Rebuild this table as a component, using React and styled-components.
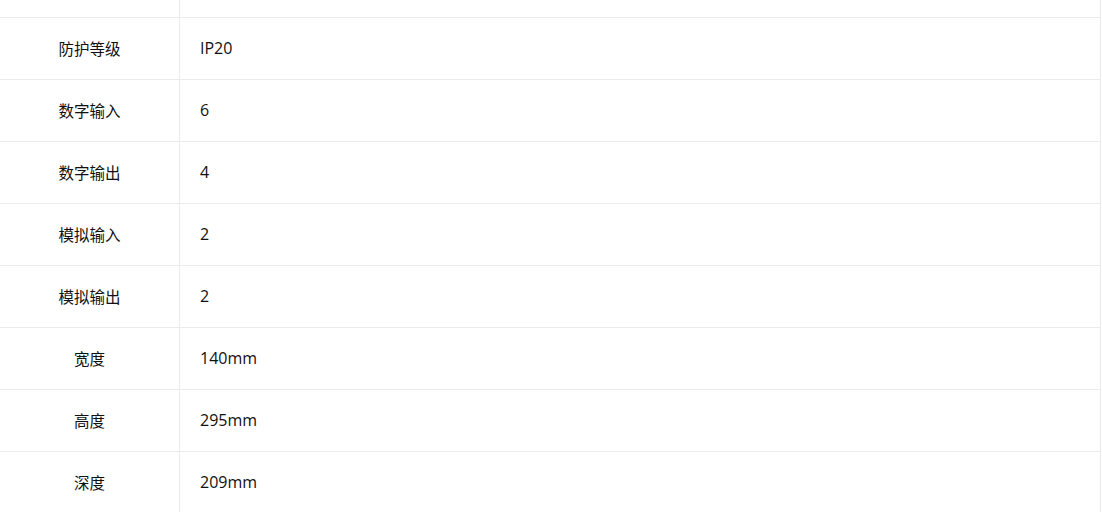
import React from "react";
import styled, { createGlobalStyle } from "styled-components";

const Global = createGlobalStyle`
  html, body { margin: 0; padding: 0; background: #fff; }
  body { font-family: "Noto Sans CJK SC", "Noto Sans", sans-serif; overflow: hidden; }
`;

const Table = styled.div`
  width: 1101px;
  border-right: 1px solid #ebebeb;
  box-sizing: border-box;
`;

const Row = styled.div`
  display: grid;
  grid-template-columns: 180px 1fr;
  height: ${(p) => (p.$partial ? 18 : 62)}px;
  border-bottom: 1px solid #ebebeb;
  box-sizing: border-box;
`;

const Label = styled.div`
  display: flex;
  align-items: center;
  justify-content: center;
  padding-bottom: 1px;
  border-right: 1px solid #ebebeb;
  font-size: 15.5px;
  color: #111;
`;

const Value = styled.div`
  display: flex;
  align-items: center;
  padding-left: 20px;
  padding-bottom: 2px;
  font-size: 16px;
  font-family: "Open Sans", "Noto Sans CJK SC", sans-serif;
  color: #111;
`;

const rows = [
  ["防护等级", "IP20"],
  ["数字输入", "6"],
  ["数字输出", "4"],
  ["模拟输入", "2"],
  ["模拟输出", "2"],
  ["宽度", "140mm"],
  ["高度", "295mm"],
  ["深度", "209mm"],
];

export default function App() {
  return (
    <>
      <Global />
      <Table>
        <Row $partial>
          <Label />
          <Value />
        </Row>
        {rows.map(([k, v]) => (
          <Row key={k}>
            <Label>{k}</Label>
            <Value>{v}</Value>
          </Row>
        ))}
      </Table>
    </>
  );
}
